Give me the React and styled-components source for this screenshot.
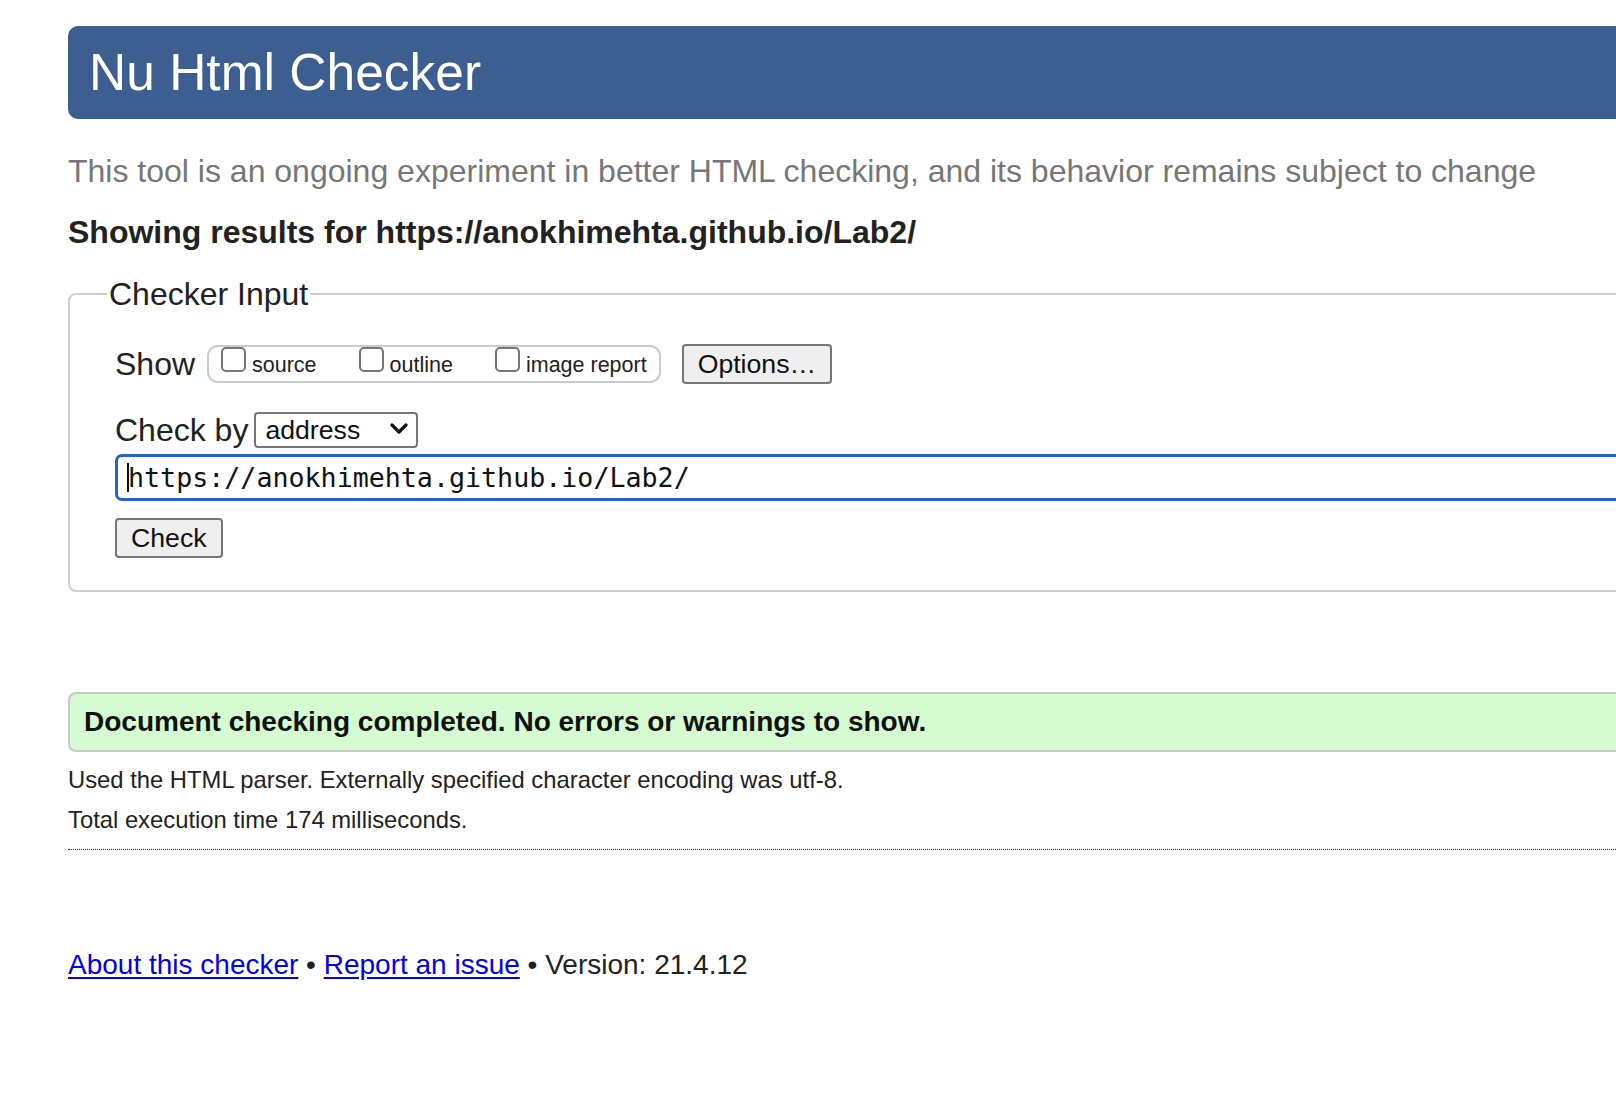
import React from 'react'
import styled, { createGlobalStyle } from 'styled-components'

const Global = createGlobalStyle`
  html, body {
    margin: 0;
    padding: 0;
    background: #fff;
    overflow: hidden;
  }
  body {
    font-family: "Liberation Sans", Arial, Helvetica, sans-serif;
    color: #222;
  }
`

const Page = styled.div`
  width: 1700px;
  padding: 26px 0 120px 68px;
  box-sizing: border-box;
`

const Header = styled.header`
  height: 93px;
  background: #3d5e90;
  border-radius: 10px;
  padding-left: 21px;
`

const Title = styled.h1`
  margin: 0;
  font-size: 51.5px;
  font-weight: normal;
  line-height: 93px;
  color: #fff;
`

const Intro = styled.p`
  margin: 34px 0 0;
  font-size: 32px;
  line-height: 36px;
  color: #777;
`

const Results = styled.h2`
  margin: 25px 0 0;
  font-size: 32px;
  line-height: 36px;
  font-weight: bold;
  color: #222;
`

const Box = styled.fieldset`
  margin: 26px 0 0;
  width: 1620px;
  box-sizing: border-box;
  border: 2px solid #cfcfcf;
  border-radius: 8px;
  padding: 32px 0 32px 45px;
  min-inline-size: 0;
`

const Legend = styled.legend`
  font-size: 32px;
  line-height: 36px;
  padding: 0 2px;
  margin-left: -8px;
  color: #222;
`

const Row = styled.div`
  display: flex;
  align-items: center;
  margin-top: ${p => p.$gap || 0}px;
`

const Label = styled.span`
  font-size: 32px;
  line-height: 36px;
  color: #222;
  margin-right: ${p => p.$space || 12}px;
`

const Pill = styled.div`
  display: flex;
  align-items: baseline;
  height: 38px;
  box-sizing: border-box;
  border: 2px solid #cbcbcb;
  border-radius: 11px;
  padding: 0 12px;
`

const Check = styled.input`
  appearance: none;
  margin: 0 0 0 ${p => p.$first ? 0 : 42}px;
  width: 25px;
  height: 25px;
  box-sizing: border-box;
  border: 2px solid #767676;
  border-radius: 5px;
  background: #fff;
`

const CheckText = styled.span`
  font-size: 21.5px;
  line-height: 25px;
  margin-left: 6px;
  color: #222;
`

const Button = styled.button`
  height: 40px;
  box-sizing: border-box;
  padding: 0 ${p => p.$pad || 15}px;
  margin-left: ${p => p.$left || 0}px;
  font-family: "Liberation Sans", Arial, sans-serif;
  font-size: 26.67px;
  color: #111;
  background: #efefef;
  border: 2px solid #767676;
  border-radius: 4px;
`

const SelectWrap = styled.div`
  position: relative;
  width: 164px;
  height: 36px;
`

const Select = styled.select`
  appearance: none;
  width: 100%;
  height: 100%;
  box-sizing: border-box;
  border: 2px solid #767676;
  border-radius: 4px;
  background: #fff;
  padding: 0 0 0 9px;
  font-family: "Liberation Sans", Arial, sans-serif;
  font-size: 26.67px;
  color: #111;
`

const Chevron = styled.svg`
  position: absolute;
  right: 10px;
  top: 11px;
  pointer-events: none;
`

const UrlWrap = styled.div`
  position: relative;
  margin-top: 6px;
`

const Url = styled.input`
  display: block;
  width: 1600px;
  height: 47px;
  box-sizing: border-box;
  border: 3px solid #2463c9;
  border-radius: 7px;
  padding: 0 0 0 10px;
  outline: none;
  font-family: "DejaVu Sans Mono", "Liberation Mono", monospace;
  font-size: 26.67px;
  color: #111;
`

const Caret = styled.span`
  position: absolute;
  left: 12px;
  top: 9px;
  width: 2px;
  height: 29px;
  background: #111;
`

const Done = styled.div`
  margin-top: 100px;
  height: 60px;
  box-sizing: border-box;
  background: #d5fbd0;
  border: 2px solid #c9c9c9;
  border-radius: 8px;
  padding-left: 14px;
  font-size: 28px;
  font-weight: bold;
  line-height: 56px;
  color: #111;
`

const Note = styled.p`
  margin: ${p => p.$first ? 8 : 0}px 0 0;
  font-size: 23.8px;
  line-height: 40px;
  color: #222;
`

const Rule = styled.hr`
  margin: 9px 0 0;
  border: none;
  border-top: 1px dotted #333;
  height: 0;
`

const Footer = styled.p`
  margin: 97px 0 0;
  font-size: 28px;
  line-height: 36px;
  color: #222;
`

const Link = styled.a`
  color: #0000ee;
  text-decoration: underline;
  text-underline-offset: 3px;
`

export default function App() {
  return (
    <>
      <Global />
      <Page>
        <Header>
          <Title>Nu Html Checker</Title>
        </Header>
        <Intro>This tool is an ongoing experiment in better HTML checking, and its behavior remains subject to change</Intro>
        <Results>Showing results for https://anokhimehta.github.io/Lab2/</Results>

        <Box>
          <Legend>Checker Input</Legend>
          <Row>
            <Label>Show</Label>
            <Pill>
              <Check type="checkbox" $first />
              <CheckText>source</CheckText>
              <Check type="checkbox" />
              <CheckText>outline</CheckText>
              <Check type="checkbox" />
              <CheckText>image report</CheckText>
            </Pill>
            <Button $left={21} $pad={14}>Options…</Button>
          </Row>
          <Row $gap={28}>
            <Label $space={6}>Check by</Label>
            <SelectWrap>
              <Select defaultValue="address">
                <option value="address">address</option>
                <option value="file">file upload</option>
                <option value="text">text input</option>
              </Select>
              <Chevron width="18" height="12" viewBox="0 0 18 12">
                <polyline points="2,2 9,9 16,2" fill="none" stroke="#111" strokeWidth="3.2" strokeLinecap="round" strokeLinejoin="round" />
              </Chevron>
            </SelectWrap>
          </Row>
          <UrlWrap>
            <Url type="url" defaultValue="https://anokhimehta.github.io/Lab2/" />
            <Caret />
          </UrlWrap>
          <Row $gap={17}>
            <Button $pad={14}>Check</Button>
          </Row>
        </Box>

        <Done>Document checking completed. No errors or warnings to show.</Done>
        <Note $first>Used the HTML parser. Externally specified character encoding was utf-8.</Note>
        <Note>Total execution time 174 milliseconds.</Note>
        <Rule />

        <Footer>
          <Link href="#about">About this checker</Link> • <Link href="#issue">Report an issue</Link> • Version: 21.4.12
        </Footer>
      </Page>
    </>
  )
}
